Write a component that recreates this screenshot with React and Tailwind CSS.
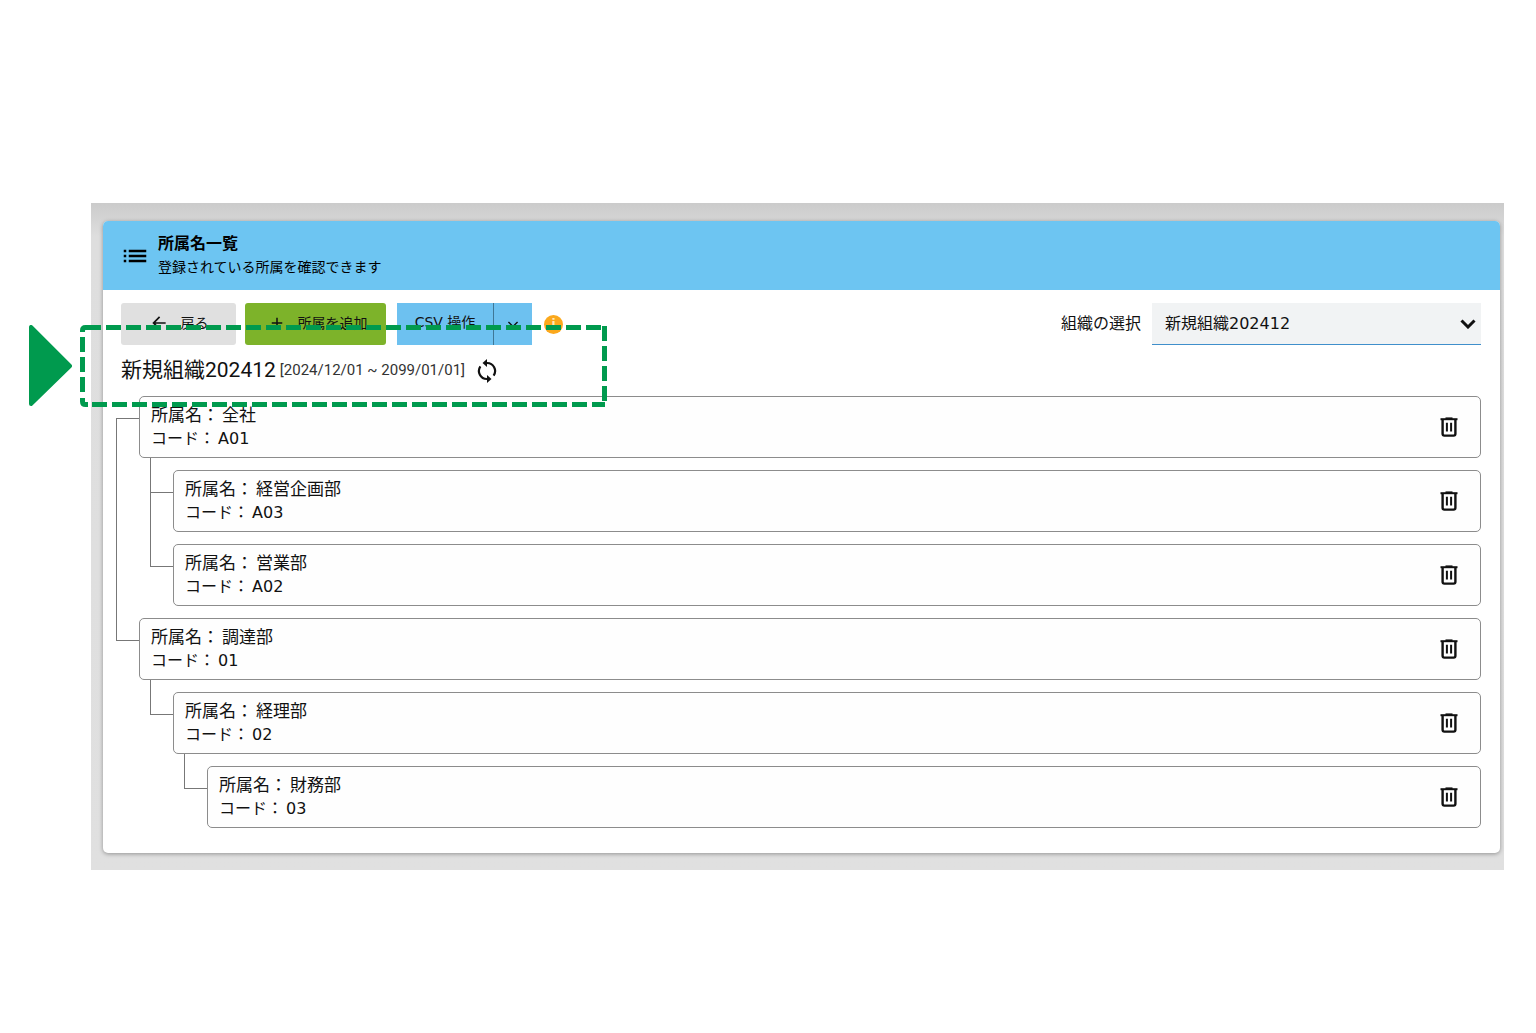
import { MdList, MdArrowBack, MdAdd } from "react-icons/md";

const departments = [
  {
    name: "全社",
    code: "A01",
    children: [
      { name: "経営企画部", code: "A03" },
      { name: "営業部", code: "A02" },
    ],
  },
  {
    name: "調達部",
    code: "01",
    children: [
      {
        name: "経理部",
        code: "02",
        children: [{ name: "財務部", code: "03" }],
      },
    ],
  },
];

function TrashIcon() {
  return (
    <svg width="18" height="20" viewBox="0 0 18 20" fill="none" stroke="currentColor" strokeWidth="2.4">
      <path d="M0.5 2.2H17.5" strokeWidth="2" />
      <path d="M5.5 1.2H12.5" strokeWidth="1.6" />
      <path d="M2.6 2V16.8Q2.6 18.6 4.4 18.6H13.6Q15.4 18.6 15.4 16.8V2" />
      <path d="M6.9 5.8V14.6M11.1 5.8V14.6" strokeWidth="2" />
    </svg>
  );
}

function RefreshIcon() {
  return (
    <svg width="20" height="24" viewBox="0 0 20 24" fill="none" stroke="currentColor" strokeWidth="2.2">
      <path d="M9 4H10A8 8 0 0 1 16.6 16.6" />
      <path d="M11 20H10A8 8 0 0 1 3.4 7.4" />
      <path d="M10 0V8L5.5 4Z" fill="currentColor" stroke="none" />
      <path d="M10 16V24L14.5 20Z" fill="currentColor" stroke="none" />
    </svg>
  );
}

function Chevron({ className, strokeWidth }) {
  return (
    <svg className={className} viewBox="0 0 16 10" fill="none" stroke="currentColor" strokeWidth={strokeWidth}>
      <path d="M1.5 1.5L8 8L14.5 1.5" />
    </svg>
  );
}

function Department({ item, root, first, last }) {
  return (
    <li className="flex">
      {/* connector lines */}
      <div className="flex w-[23px] shrink-0 flex-col">
        {root && first ? (
          <div className="h-[22px]" />
        ) : (
          <div className="h-[34px] border-l border-[#777]" />
        )}
        <div className={`flex-1 border-t border-[#777] ${last ? "" : "border-l"}`} />
      </div>

      <div className={`min-w-0 flex-1 ${root && first ? "" : "pt-3"}`}>
        <div className="flex h-[62px] items-center justify-between rounded-[5px] border border-[#8c8c8c] bg-[#fefefe] pr-[22px] pl-[11px]">
          <div>
            <p className="flex gap-[3px] text-[17px] leading-6">
              <span>所属名：</span>
              <span>{item.name}</span>
            </p>
            <p className="flex gap-[3px] text-base leading-6">
              <span>コード：</span>
              <span>{item.code}</span>
            </p>
          </div>
          <button type="button" aria-label={`${item.name}を削除`}>
            <TrashIcon />
          </button>
        </div>
        {item.children && (
          <div className="pl-[11px]">
            <DepartmentList items={item.children} />
          </div>
        )}
      </div>
    </li>
  );
}

function DepartmentList({ items, root }) {
  return (
    <ul>
      {items.map((item, index) => (
        <Department
          key={item.code}
          item={item}
          root={root}
          first={index === 0}
          last={index === items.length - 1}
        />
      ))}
    </ul>
  );
}

function App() {
  return (
    <div className="min-h-screen bg-white pt-[203px] pr-8 pb-40 pl-[91px] font-['DejaVu_Sans','Noto_Sans_CJK_JP',sans-serif] text-[#111]">
      <div className="relative bg-linear-to-b from-[#cbcbcb] via-[#dedede] via-5% to-[#e0e0e0] pt-[18px] pr-1 pb-[17px] pl-3">
        <main className="rounded-[5px] bg-white pb-[25px] shadow-[0_1px_4px_rgba(0,0,0,0.35)]">

          {/* ===== HEADER ===== */}
          <header className="flex h-[69px] items-center gap-2 rounded-t-[5px] bg-[#6dc5f2] pl-[17px] text-black">
            <MdList size={30} />
            <div className="pb-0.5">
              <h1 className="text-base leading-6 font-bold">所属名一覧</h1>
              <p className="text-sm leading-[22px]">登録されている所属を確認できます</p>
            </div>
          </header>

          {/* ===== TOOLBAR ===== */}
          <div className="flex items-center justify-between pt-[13px] pr-[19px] pl-[18px]">
            <div className="flex items-center text-sm">
              <button type="button" className="flex h-[42px] w-[115px] items-center justify-center gap-3 rounded-[3px] bg-[#e0e0e0] pb-0.5">
                <MdArrowBack size={20} />
                戻る
              </button>
              <button type="button" className="ml-[9px] flex h-[42px] w-[141px] items-center justify-center gap-3 rounded-[3px] bg-[#7db32a] pb-0.5 pl-1">
                <MdAdd size={18} />
                所属を追加
              </button>
              <div className="ml-[11px] flex h-[42px] bg-[#6dc1f0]">
                <button type="button" className="w-[96px] pb-1">CSV 操作</button>
                <button type="button" aria-label="CSV 操作メニュー" className="flex w-[39px] items-center justify-center border-l border-[#3f7796]">
                  <Chevron className="h-[7px] w-3" strokeWidth={2} />
                </button>
              </div>
              <button type="button" aria-label="ヘルプ" className="ml-3 flex size-[19px] items-center justify-center rounded-full bg-[#fba81c] text-xs font-bold text-[#ffe9b8]">
                i
              </button>
            </div>

            <div className="flex items-center gap-[11px]">
              <label htmlFor="organization" className="text-base">組織の選択</label>
              <div className="relative">
                <select
                  id="organization"
                  className="h-[42px] w-[329px] appearance-none border-b border-[#3f8fcb] bg-[#f1f3f4] px-[13px] text-base"
                >
                  <option>新規組織202412</option>
                </select>
                <Chevron className="pointer-events-none absolute top-4 right-[5px] h-[10px] w-4" strokeWidth={3} />
              </div>
            </div>
          </div>

          {/* ===== ORGANIZATION ===== */}
          <div className="flex h-[51px] items-center pl-[18px] font-['Roboto','Noto_Sans_CJK_JP',sans-serif]">
            <h2 className="pb-0.5 text-[21px] leading-8">新規組織202412</h2>
            <span className="ml-1 text-[15px] text-[#333]">[2024/12/01 ~ 2099/01/01]</span>
            <button type="button" aria-label="更新" className="ml-3">
              <RefreshIcon />
            </button>
          </div>

          {/* ===== TREE ===== */}
          <div className="pr-[19px] pl-[13px]">
            <DepartmentList items={departments} root />
          </div>
        </main>

        {/* ===== CALLOUT ===== */}
        <svg className="pointer-events-none absolute top-[122px] left-[-62px] h-[84px] w-[580px]" viewBox="0 0 580 84" fill="none">
          <path d="M2 2V79L41 41Z" fill="#009a4e" stroke="#009a4e" strokeWidth="4" strokeLinejoin="round" />
          <g stroke="#009a4e" strokeWidth="5">
            <path d="M53.5 7V5.5Q53.5 2.5 56.5 2.5H60" />
            <path d="M53.5 73V76.5Q53.5 79.5 56.5 79.5H59" />
            <path d="M57 2.5H574" strokeDasharray="15 5" />
            <path d="M53.5 12V67" strokeDasharray="15 5" />
            <path d="M575.5 1V76" strokeDasharray="15 5" />
            <path d="M63 79.5H576" strokeDasharray="15 5" />
          </g>
        </svg>
      </div>
    </div>
  );
}

export default App;
